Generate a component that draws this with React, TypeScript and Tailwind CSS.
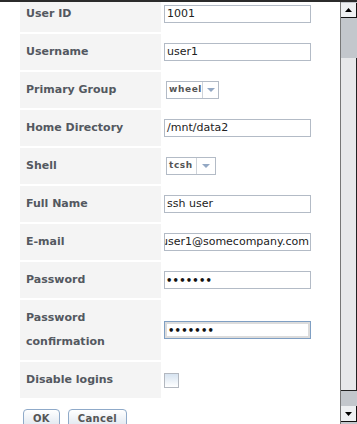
import React from 'react'

const font = { fontFamily: '"DejaVu Sans", "Liberation Sans", sans-serif' }

function TextBox({ value, focused, alignEnd }: { value: string; focused?: boolean; alignEnd?: boolean }) {
  return (
    <div
      className={
        'w-[147px] h-[18px] bg-white flex items-center overflow-hidden whitespace-nowrap text-[11px] text-[#222] ' +
        (focused ? 'border border-[#7f9fc3] shadow-[inset_0_0_0_2px_#dcdcdc]' : 'border border-[#b3bbc6]') +
        (alignEnd ? ' justify-end pr-[1px]' : ' pl-[2px]')
      }
    >
      {value}
    </div>
  )
}

function Dots() {
  return <span className="text-[10px] font-bold tracking-[0.2px] pl-[1px] text-[#111]">•••••••</span>
}

function Select({ value, w }: { value: string; w: string }) {
  return (
    <div className={'ml-[2px] h-[18px] bg-white border border-[#b3bbc6] flex items-stretch ' + w}>
      <span className="flex-1 flex items-center pl-[2px] text-[9px] font-bold tracking-[0.6px] text-[#555]">{value}</span>
      <span className="w-[19px] border-l border-[#cfd4da] flex items-center justify-center">
        <svg width="8" height="4" viewBox="0 0 8 4">
          <path d="M0 0h8L4 4z" fill="#93a8c4" />
        </svg>
      </span>
    </div>
  )
}

function Row({ label, children, tall }: { label: React.ReactNode; children: React.ReactNode; tall?: boolean }) {
  return (
    <div className="flex">
      <div
        className={
          'w-[141px] bg-[#f4f4f4] pl-[6px] flex items-center text-[11px] font-bold text-[#535860] leading-[24px] ' +
          (tall ? 'h-[60px]' : 'h-[36px]')
        }
      >
        {label}
      </div>
      <div className="flex-1 pl-[3px] flex items-center">{children}</div>
    </div>
  )
}

function Scrollbar() {
  return (
    <div className="w-[17px] h-full flex flex-col bg-[#c3c7cc] border-l border-[#777]">
      <div className="h-[15px] bg-[#eef0f2] border-r border-b border-[#111] flex items-center justify-center mt-[1px]">
        <svg width="7" height="4" viewBox="0 0 7 4">
          <path d="M0 4h7L3.5 0z" fill="#000" />
        </svg>
      </div>
      <div className="h-[40px]" />
      <div className="h-[333px] bg-[#e7e8ea] border-r border-b border-[#222]" />
      <div className="flex-1" />
      <div className="h-[16px] bg-[#eef0f2] border-r border-b border-[#111] flex items-center justify-center mb-[2px]">
        <svg width="7" height="4" viewBox="0 0 7 4">
          <path d="M0 0h7L3.5 4z" fill="#000" />
        </svg>
      </div>
    </div>
  )
}

export default function App() {
  return (
    <div className="w-[357px] h-[424px] bg-white border-t-2 border-[#2b2b2b] flex overflow-hidden" style={font}>
      <div className="flex-1 overflow-hidden pl-[20px]">
        <div className="-mt-[6px] flex flex-col gap-[2px] w-[300px]">
          <Row label="User ID">
            <TextBox value="1001" />
          </Row>
          <Row label="Username">
            <TextBox value="user1" />
          </Row>
          <Row label="Primary Group">
            <Select value="wheel" w="w-[53px]" />
          </Row>
          <Row label="Home Directory">
            <TextBox value="/mnt/data2" />
          </Row>
          <Row label="Shell">
            <Select value="tcsh" w="w-[50px]" />
          </Row>
          <Row label="Full Name">
            <TextBox value="ssh user" />
          </Row>
          <Row label="E-mail">
            <TextBox value="user1@somecompany.com" alignEnd />
          </Row>
          <Row label="Password">
            <div className="w-[147px] h-[18px] border border-[#b3bbc6] flex items-center">
              <Dots />
            </div>
          </Row>
          <Row label={<span>Password<br />confirmation</span>} tall>
            <div className="w-[147px] h-[18px] border border-[#7f9fc3] shadow-[inset_0_0_0_2px_#dcdcdc] flex items-center pl-[2px]">
              <Dots />
            </div>
          </Row>
          <Row label="Disable logins">
            <div className="w-[15px] h-[15px] border border-[#b3b8c0] bg-gradient-to-b from-[#d6e3f0] to-white" />
          </Row>
          <div className="flex gap-[8px] pl-[3px] pt-[9px]">
            <button className="h-[20px] px-[9px] rounded-t-[4px] border border-[#8faac9] bg-gradient-to-b from-white to-[#dde5ee] text-[10px] leading-[12px] font-bold tracking-[0.3px] text-[#555]">
              OK
            </button>
            <button className="h-[20px] px-[9px] rounded-t-[4px] border border-[#8faac9] bg-gradient-to-b from-white to-[#dde5ee] text-[10px] leading-[12px] font-bold tracking-[0.3px] text-[#555]">
              Cancel
            </button>
          </div>
        </div>
      </div>
      <Scrollbar />
    </div>
  )
}
